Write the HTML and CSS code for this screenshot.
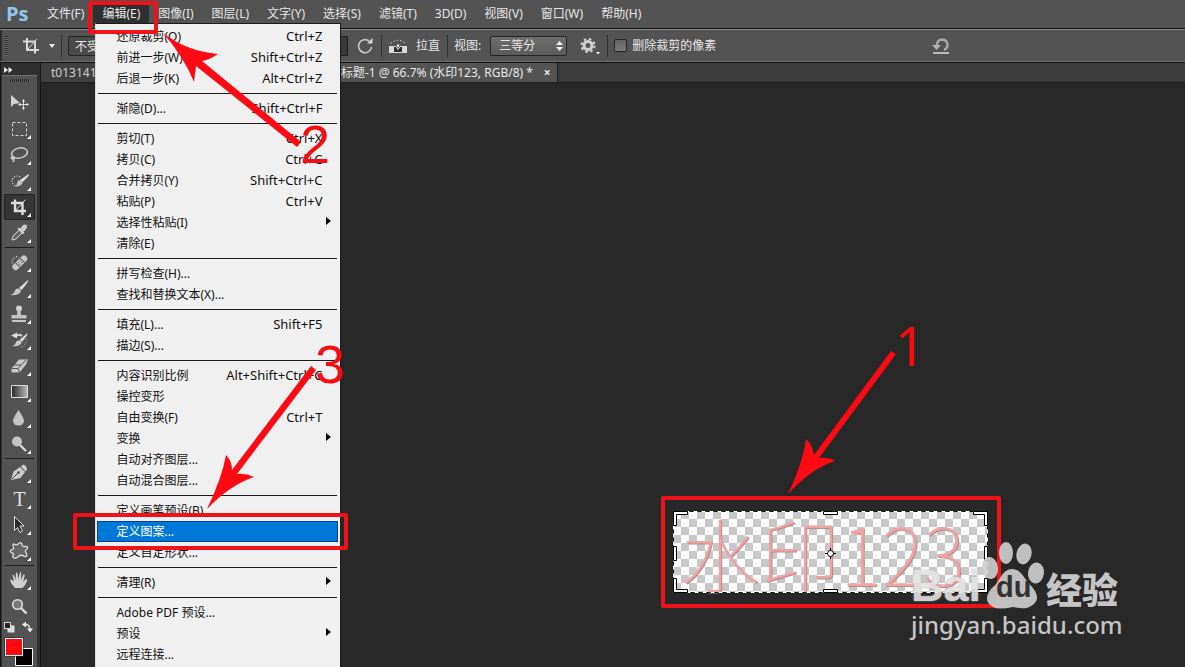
FILE: index.html
```html
<!DOCTYPE html>
<html lang="zh-CN">
<head>
<meta charset="utf-8">
<title>Ps</title>
<link rel="stylesheet" href="styles.css">
</head>
<body>
<div class="app">
  <header class="menubar">
    <span class="logo">Ps</span>
    <nav class="menus">
      <button class="menu-title">文件(F)</button>
      <div class="menu-holder">
        <button class="menu-title is-open">编辑(E)</button>
        <div class="dropdown">
          <button class="entry"><span>还原裁剪(O)</span><kbd>Ctrl+Z</kbd></button>
          <button class="entry"><span>前进一步(W)</span><kbd>Shift+Ctrl+Z</kbd></button>
          <button class="entry"><span>后退一步(K)</span><kbd>Alt+Ctrl+Z</kbd></button>
          <hr class="rule">
          <button class="entry"><span>渐隐(D)...</span><kbd>Shift+Ctrl+F</kbd></button>
          <hr class="rule">
          <button class="entry"><span>剪切(T)</span><kbd>Ctrl+X</kbd></button>
          <button class="entry"><span>拷贝(C)</span><kbd>Ctrl+C</kbd></button>
          <button class="entry"><span>合并拷贝(Y)</span><kbd>Shift+Ctrl+C</kbd></button>
          <button class="entry"><span>粘贴(P)</span><kbd>Ctrl+V</kbd></button>
          <button class="entry has-sub"><span>选择性粘贴(I)</span></button>
          <button class="entry"><span>清除(E)</span></button>
          <hr class="rule">
          <button class="entry"><span>拼写检查(H)...</span></button>
          <button class="entry"><span>查找和替换文本(X)...</span></button>
          <hr class="rule">
          <button class="entry"><span>填充(L)...</span><kbd>Shift+F5</kbd></button>
          <button class="entry"><span>描边(S)...</span></button>
          <hr class="rule">
          <button class="entry"><span>内容识别比例</span><kbd>Alt+Shift+Ctrl+C</kbd></button>
          <button class="entry"><span>操控变形</span></button>
          <button class="entry"><span>自由变换(F)</span><kbd>Ctrl+T</kbd></button>
          <button class="entry has-sub"><span>变换</span></button>
          <button class="entry"><span>自动对齐图层...</span></button>
          <button class="entry"><span>自动混合图层...</span></button>
          <hr class="rule">
          <button class="entry"><span>定义画笔预设(B)...</span></button>
          <button class="entry is-active"><span>定义图案...</span></button>
          <button class="entry"><span>定义自定形状...</span></button>
          <hr class="rule">
          <button class="entry has-sub"><span>清理(R)</span></button>
          <hr class="rule">
          <button class="entry"><span>Adobe PDF 预设...</span></button>
          <button class="entry has-sub"><span>预设</span></button>
          <button class="entry"><span>远程连接...</span></button>
        </div>
      </div>
      <button class="menu-title">图像(I)</button>
      <button class="menu-title">图层(L)</button>
      <button class="menu-title">文字(Y)</button>
      <button class="menu-title">选择(S)</button>
      <button class="menu-title">滤镜(T)</button>
      <button class="menu-title">3D(D)</button>
      <button class="menu-title">视图(V)</button>
      <button class="menu-title">窗口(W)</button>
      <button class="menu-title">帮助(H)</button>
    </nav>
  </header>

  <div class="options">
    <span class="grip"></span>
    <button class="option-tool" aria-label="裁剪工具">
      <svg width="36" height="20" viewBox="0 0 36 20"><g fill="none" stroke="#d8d8d8" stroke-width="2"><path d="M5 2v12h12M1 5.500h12v12"/><path d="M5.500 13.500L15 3" stroke-width="1"/></g><path d="M27 8h6l-3 4z" fill="#e6e6e6"/></svg>
    </button>
    <span class="bar"></span>
    <select class="ratio" aria-label="比例"><option>不受约束</option></select>
    <input class="size" type="text" aria-label="高度">
    <button class="flat rotate" aria-label="旋转裁剪框"><svg width="18" height="18" viewBox="0 0 18 18"><path d="M13 4A6.500 6.500 0 1 0 15.500 10" fill="none" stroke="#c8c8c8" stroke-width="1.600"/><path d="M11 6.500h5.500V1z" fill="#d8d8d8"/></svg></button>
    <span class="bar"></span>
    <button class="flat straighten"><svg width="20" height="18" viewBox="0 0 20 18"><path d="M2.500 6.500Q10 0 17.500 6.500" fill="none" stroke="#ddd" stroke-dasharray="1.500 2"/><path d="M1 9h4v7H1zM15 9h4v7h-4z" fill="#d8d8d8"/><path d="M5.500 15.500V9.500h2.500l2 3 2-3h2.500v6z" fill="#2c2c2c" stroke="#ddd"/><path d="M8.500 7.500h3L10 11z" fill="#eee"/></svg><span>拉直</span></button>
    <span class="bar"></span>
    <label class="view">视图: <span class="picker"><select><option>三等分</option></select><svg width="7" height="10" viewBox="0 0 7 10"><path d="M0 4h7L3.500 0zM0 6h7l-3.500 4z" fill="#f0f0f0"/></svg></span></label>
    <button class="flat gear" aria-label="设置"><svg width="22" height="18" viewBox="0 0 22 18"><circle cx="8" cy="8.500" r="4" fill="none" stroke="#d0d0d0" stroke-width="3"/><circle cx="8" cy="8.500" r="6.500" fill="none" stroke="#d0d0d0" stroke-width="2" stroke-dasharray="2.600 2.500"/><path d="M16 15h4l-2 2.500z" fill="#fff"/></svg></button>
    <span class="bar"></span>
    <label class="delete-crop"><input type="checkbox"><span>删除裁剪的像素</span></label>
    <button class="flat reset" aria-label="复位裁剪"><svg width="18" height="18" viewBox="0 0 18 18"><path d="M5 9Q4.500 2.500 10.500 2.500Q15.500 3 15.500 8Q15.500 11.500 12 13" fill="none" stroke="#a8a8a8" stroke-width="2.400"/><path d="M0 8h9l-4.500 5z" fill="#b4b4b4"/><path d="M1 16h16" stroke="#e8e8e8" stroke-width="1.400"/></svg></button>
  </div>

  <div class="workspace">
    <aside class="toolbox">
      <button class="collapse" aria-label="展开"><svg width="9" height="6" viewBox="0 0 9 6"><path d="M0 0l4 3-4 3zM4.500 0l4 3-4 3z" fill="#eee"/></svg></button>
      <div class="tools">
        <span class="handle"></span>
        <button class="tool" aria-label="移动"><svg viewBox="0 0 31 26"><path d="M7 5v12l3-3 6-1z" fill="#d2d2d2"/><path d="M15 14.500h9M19.500 10v9" stroke="#ddd"/><path d="M18 11.500h3L19.500 9zM18 17.500h3L19.500 20zM16.500 13v3L14 14.500zM22.500 13v3l2.500-1.500z" fill="#eee"/></svg></button>
        <button class="tool more" aria-label="选框"><svg viewBox="0 0 31 26"><path d="M8.500 6.500h14v13h-14z" fill="none" stroke="#d8d8d8" stroke-dasharray="3 2"/></svg></button>
        <button class="tool more" aria-label="套索"><svg viewBox="0 0 31 26"><g fill="none" stroke="#ccc" stroke-width="1.500"><ellipse cx="15.500" cy="11" rx="8" ry="5" transform="rotate(-12 15.500 11)"/><path d="M9.500 14.500q-3 .5-2 2 2 1.500 3-.5-.5-2-2 0 3 2 0 4"/></g></svg></button>
        <button class="tool more" aria-label="快速选择"><svg viewBox="0 0 31 26"><path d="M16 9a5 5 0 1 0-2 9" fill="none" stroke="#ddd" stroke-width="1.300" stroke-dasharray="1 1.600"/><path d="M24.500 6q2 1-6 8l-2.500-2z" fill="#ddd"/><path d="M16 12q3 1 2.500 3-2 4-8 3 3-1 2.500-3 .5-2.500 3-3z" fill="#c4c4c4"/></svg></button>
        <button class="tool more is-selected" aria-label="裁剪"><svg viewBox="0 0 31 26"><path d="M11 5.500v11.500h11M7 9h11.500v12" fill="none" stroke="#ddd" stroke-width="2.400"/><path d="M12 16L21.500 5.500" stroke="#ddd"/></svg></button>
        <button class="tool more" aria-label="吸管"><svg viewBox="0 0 31 26"><path d="M8 20q0-3 2-5l5-5 3 3-5 5q-2 2-5 2z" fill="#686868" stroke="#ddd"/><path d="M13.500 8.500l1.500-1 1.500 1q2-4 4.500-4t2 3q-.5 2-3.500 4l1 1.500-1.500 1.500z" fill="#c8c8c8"/></svg></button>
        <hr class="tool-rule">
        <button class="tool more" aria-label="修复画笔"><svg viewBox="0 0 31 26"><path d="M12 18a5 5 0 1 1 3-10" fill="none" stroke="#ddd" stroke-width="1.300" stroke-dasharray="1 1.600"/><g transform="rotate(-45 16 14)"><rect x="7" y="10.500" width="18" height="6.500" rx="3" fill="#c8c8c8"/><path d="M13 10.500v6.500M19.500 10.500v6.500" stroke="#555"/><path d="M14.500 12.500h1M17 12.500h1M14.500 15h1M17 15h1" stroke="#333"/></g></svg></button>
        <button class="tool more" aria-label="画笔"><svg viewBox="0 0 31 26"><path d="M24 5q1.500 1-6.500 10l-2.500-2z" fill="#ddd"/><path d="M14 13.500q3 .5 3 3-2.500 4.500-11 3.500 4-1 4.500-3.500 1-3 3.500-3z" fill="#c8c8c8"/></svg></button>
        <button class="tool more" aria-label="图章"><svg viewBox="0 0 31 26"><circle cx="15" cy="7.500" r="3" fill="#d0d0d0"/><path d="M13.500 9h3l.5 5h5.500v3.500h-15v-3.500H13z" fill="#c4c4c4"/><path d="M8 20h14" stroke="#eee" stroke-width="1.500"/></svg></button>
        <button class="tool more" aria-label="历史记录画笔"><svg viewBox="0 0 31 26"><path d="M11 9.500q4-3 7-.5" fill="none" stroke="#ccc" stroke-width="2"/><path d="M7 8.500l6-3v6z" fill="#ddd"/><path d="M23.500 6q1 1-5.500 9l-2.500-2z" fill="#ddd"/><path d="M14.500 13.500q3 .5 3 2.500-2.500 4-9.500 3 3.500-1 3.500-3 .5-2.500 3-2.500z" fill="#ccc"/><path d="M22 12q1 6-5 8" fill="none" stroke="#ddd" stroke-dasharray="1 2"/></svg></button>
        <button class="tool more" aria-label="橡皮擦"><svg viewBox="0 0 31 26"><path d="M7.500 15.500L15 6.500h9l-2 5-6.500 8h-8z" fill="#c8c8c8"/><path d="M7.500 15.500H14l1.500 4M14 15.500L22 7M10.500 12H17" fill="none" stroke="#555"/></svg></button>
        <button class="tool more" aria-label="渐变"><svg viewBox="0 0 31 26"><defs><linearGradient id="ramp"><stop stop-color="#282828"/><stop offset="1" stop-color="#bbb"/></linearGradient></defs><path d="M7.500 6.500h16v12h-16z" fill="url(#ramp)" stroke="#ddd"/></svg></button>
        <button class="tool more" aria-label="模糊"><svg viewBox="0 0 31 26"><path d="M14.500 5q5.500 8 5.500 11a5.500 4.500 0 0 1-11 0q0-3 5.500-11z" fill="#c4c4c4"/></svg></button>
        <button class="tool more" aria-label="减淡"><svg viewBox="0 0 31 26"><path d="M16 14l6 6" stroke="#ddd" stroke-width="2.200"/><circle cx="13" cy="10.500" r="5" fill="#c4c4c4"/></svg></button>
        <hr class="tool-rule">
        <button class="tool more" aria-label="钢笔"><svg viewBox="0 0 31 26"><path d="M7 20l2.500-8.500L16 7l5 5-4.500 6z" fill="#ccc"/><path d="M17 6.500l2-2q4 1 4 5l-1.500 2z" fill="#ccc"/><path d="M8 19l6-6" stroke="#444"/><circle cx="14.500" cy="12.500" r="1.200" fill="#444"/></svg></button>
        <button class="tool more type">T</button>
        <button class="tool more" aria-label="路径选择"><svg viewBox="0 0 31 26"><path d="M10.500 4.500v14l3-3 2.500 5 2.500-1.500-2.500-5h4z" fill="#2a2a2a" stroke="#ddd"/></svg></button>
        <button class="tool more" aria-label="形状"><svg viewBox="0 0 31 26"><path d="M10 6Q13 8 14.500 5.500Q17 3.500 18 6Q18 9 21 8.500Q25 8 23 11Q20 13 22.500 15.500Q24 19 20.500 18.500Q17 16 14.500 18.500Q10 22 8.500 18.500Q11 15.500 8 15Q4.500 13 8 11.500Q11 11 9 8Q8.500 6 10 6Z" fill="#666" stroke="#ddd" stroke-width="1.300"/></svg></button>
        <hr class="tool-rule">
        <button class="tool more" aria-label="抓手"><svg viewBox="0 0 31 26"><path d="M11 21q-4-4-5-8 1-1.500 4 2L8.500 8q1.500-1.500 3 5l.5-7.500q2-1 2.300 7l1.700-7.500q2 0 .8 8l3-6q2 0-.8 8l3-3q2 0 .5 3-2 5-4.500 6z" fill="#d0d0d0"/></svg></button>
        <button class="tool" aria-label="缩放"><svg viewBox="0 0 31 26"><path d="M17 15l5.500 5.500" stroke="#ddd" stroke-width="2.400"/><circle cx="13.500" cy="11.500" r="4.800" fill="#777" stroke="#ddd" stroke-width="1.600"/></svg></button>
        <button class="tool swaps" aria-label="切换颜色"><svg viewBox="0 0 31 18"><path d="M3.500 6.500h7v7h-7z" fill="#ddd"/><path d="M.5 3.500h6v6h-6z" fill="#222" stroke="#ddd"/><path d="M20 5.500q6-1 6 6" fill="none" stroke="#ddd" stroke-width="1.500"/><path d="M18 5.500l4-3v6zM23 9.500h6l-3 4z" fill="#eee"/></svg></button>
        <div class="swatches"><svg viewBox="0 0 31 30"><path d="M11.500 11.500h17v17h-17z" fill="#000" stroke="#fff"/><path d="M.5.500h19v19H.5z" fill="#222"/><path d="M1.500 1.500h17v17h-17z" fill="#ff0812" stroke="#fff"/></svg></div>
      </div>
    </aside>
    <main class="stage">
      <div class="tabs">
        <button class="tab first">t013141</button>
        <button class="tab is-current"><span>未标题-1 @ 66.7% (水印123, RGB/8) *</span><span class="close">×</span></button>
      </div>
      <div class="canvas">
        <div class="picture">
          <span class="art">水印123</span>
          <svg class="crop-frame" viewBox="0 0 315 82"><path d="M.5.500h314v81H.5z" fill="none" stroke="#fff"/><path d="M.5.500h314v81H.5z" fill="none" stroke="#000" stroke-dasharray="4 4"/><g fill="#fff" stroke="#000"><path d="M.5.500h14v3H3.500v11h-3zM314.500.500h-14v3h11v11h3zM.5 81.500h14v-3H3.500v-11h-3zM314.500 81.500h-14v-3h11v-11h3zM150.500.500h14v3h-14zM150.500 78.500h14v3h-14zM.5 35.500h3v14h-3zM311.500 35.500h3v14h-3z"/></g><circle cx="157.500" cy="42.500" r="3" fill="#fff" stroke="#000"/><path d="M157.500 37v3M157.500 45v3M152 42.500h3M160 42.500h3" stroke="#000"/></svg>
        </div>
      </div>
    </main>
  </div>

  <svg class="notes" width="1185" height="667" viewBox="0 0 1185 667">
    <g class="frames">
      <rect x="90" y="3" width="66" height="29"/>
      <rect x="75" y="515" width="271" height="33"/>
      <rect x="663" y="498" width="336" height="108"/>
    </g>
    <g class="arrows">
      <path d="M788 494Q803 462 806 439Q812 444 814 455L891 351L896 354L819 458Q828 457 835 461Q812 468 788 494z"/>
      <path d="M163 33Q186 51 218 54Q209 60 202 61L301 142L297 147L196 66Q195 74 194 82Q184 57 163 33z"/>
      <path d="M207 509Q222 478 226 455Q232 461 232 470L311 366L316 370L237 474Q246 473 254 477Q230 485 207 509z"/>
    </g>
    <g class="numbers">
      <text class="one" x="895" y="366">1</text>
      <text x="300" y="163">2</text>
      <text x="315" y="383">3</text>
    </g>
  </svg>

  <div class="brand">
    <div class="brand-top">
      <span class="brand-bai">Bai</span>
      <span class="paw"><svg viewBox="0 0 66 68"><g fill="#d0d0d0"><ellipse cx="10" cy="27" rx="8" ry="11" transform="rotate(-8 10 27)"/><ellipse cx="26" cy="12" rx="7" ry="11"/><ellipse cx="44" cy="13" rx="7.500" ry="10.500" transform="rotate(12 44 13)"/><ellipse cx="56" cy="32" rx="8" ry="10.500" transform="rotate(8 56 32)"/><path d="M32 28q7 0 12 8 4 6 9 11 9 12-2 18-5 4-18 1-15 3-20 0-11-6-2-18 6-5 9-11 5-9 12-9z"/></g></svg><b class="brand-du">du</b></span>
      <span class="brand-jy">经验</span>
    </div>
    <div class="brand-url">jingyan.baidu.com</div>
  </div>
</div>
</body>
</html>
```
FILE: styles.css
```css
* { box-sizing: border-box; }
body {
  margin: 0;
  background: #282828;
  color: #e6e6e6;
  font: 12px/20px "Noto Sans", "Noto Sans CJK SC", sans-serif;
  overflow: hidden;
}
button, input, select { font: inherit; color: inherit; margin: 0; }
button { border: 0; padding: 0; background: none; white-space: nowrap; }
svg { display: block; }

.app { position: relative; display: flex; flex-direction: column; height: 100vh; }

.menubar { display: flex; align-items: center; height: 28px; background: #535353; }
.logo { width: 38px; padding-left: 6px; font: bold 20px/26px "Open Sans", sans-serif; color: #93c4ec; }
.menus { display: flex; }
.menu-title { padding: 0 9px; height: 24px; line-height: 24px; }
.menu-title.is-open { background: #303030; }
.menu-holder { position: relative; }

.dropdown {
  position: absolute;
  z-index: 2;
  top: 21px;
  left: 2px;
  width: 246px;
  padding: 2px 2px 8px 1px;
  background: #f0f0f0;
  border: 1px solid #1c1c1c;
  border-left-color: #d8d8d8;
  color: #111;
}
.entry {
  position: relative;
  display: flex;
  justify-content: space-between;
  align-items: center;
  width: 100%;
  height: 21px;
  padding: 0 16px 0 19px;
}
.entry kbd { font: 13px/18px "Noto Sans", sans-serif; height: 20px; }
.entry.is-active { background: #0078d7; color: #fff; outline: 1px solid #0a3f9c; outline-offset: -1px; }
.has-sub::after {
  content: "";
  margin-right: -9px;
  margin-bottom: 4px;
  border: 4px solid transparent;
  border-left: 5px solid #000;
  border-right: 0;
}
.rule { height: 1px; margin: 4px 1px; border: 0; background: #1a1a1a; }

.options {
  display: flex;
  align-items: center;
  height: 35px;
  padding-left: 5px;
  background: #535353;
  border-top: 1px solid #111;
  border-bottom: 1px solid #111;
  box-shadow: inset 0 1px #8a8a8a, inset 0 -1px #6c6c6c, inset 2px 0 #2c2c2c;
}
.grip { width: 3px; height: 20px; background: repeating-linear-gradient(#2a2a2a 0 1px, #707070 1px 2px); }
.option-tool { margin: 0 3px 0 14px; }
.bar { width: 1px; height: 22px; background: #303030; flex: none; }
.ratio {
  width: 160px; height: 20px; margin-left: 6px; padding-left: 6px;
  appearance: none; background: #4a4a4a; border: 1px solid #262626; border-radius: 2px;
}
.size { width: 110px; height: 20px; margin-left: 10px; background: #3a3a3a; border: 1px solid #1e1e1e; }
.rotate { margin: 0 7px 0 8px; }
.straighten { display: flex; align-items: center; gap: 8px; margin: 0 7px 0 6px; }
.view { display: flex; align-items: center; gap: 9px; margin-left: 6px; }
.picker { position: relative; }
.picker select {
  display: block; width: 77px; height: 20px; padding: 0 0 0 8px; appearance: none; line-height: 16px;
  background: linear-gradient(#6e6e6e, #5a5a5a); border: 1px solid #252525; border-radius: 2px;
}
.picker svg { position: absolute; top: 5px; right: 4px; }
.gear { margin: 0 5px 0 13px; }
.delete-crop { display: flex; align-items: center; gap: 5px; margin-left: 6px; }
.delete-crop input {
  width: 13px; height: 13px; appearance: none; border: 1px solid #262626; border-radius: 2px;
  background: linear-gradient(#626262, #7a7a7a);
}
.reset { margin-left: 216px; }

.workspace { display: flex; flex: 1; min-height: 0; }
.toolbox {
  flex: none; width: 41px; padding: 1px 3px 0 1px; background: #303030;
  border-right: 1px solid #161616; border-left: 1px solid #161616;
}
.collapse { display: flex; align-items: center; width: 100%; height: 11px; padding-left: 2px; }
.tools { display: flex; flex-direction: column; align-items: center; height: 100%; background: #535353; border-top: 1px solid #707070; }
.handle { width: 20px; height: 3px; margin: 3px 0 8px; background: repeating-linear-gradient(90deg, #222 0 1px, #606060 1px 2px); }
.tool { position: relative; flex: none; width: 31px; height: 26px; }
.tool.is-selected { background: #353535; box-shadow: inset 0 0 0 1px #222; border-radius: 2px; }
.more::after {
  content: ""; position: absolute; right: 4px; bottom: 3px;
  border: 2px solid; border-color: transparent #fff #fff transparent;
}
.tool-rule { width: 29px; height: 1px; margin: 1px 0; border: 0; background: #1c1c1c; flex: none; }
.type { font: 20px/26px "Liberation Serif", serif; color: #e0e0e0; }
.tool.swaps { height: 18px; }
.swatches { flex: none; width: 31px; height: 30px; }

.stage { flex: 1; min-width: 0; display: flex; flex-direction: column; }
.tabs { display: flex; height: 20px; background: #3b3b3b; border-bottom: 1px solid #1e1e1e; }
.tab { padding: 0 10px; border-right: 1px solid #1e1e1e; line-height: 20px; color: #cfcfcf; text-align: left; }
.tab.first { width: 279px; background: #404040; }
.tab.is-current { display: flex; gap: 11px; padding: 0 6px 0 9px; background: #535353; color: #e8e8e8; }
.close { font-weight: bold; }
.canvas { position: relative; flex: 1; background: #282828; }
.picture {
  position: absolute; left: 632px; top: 428px; width: 315px; height: 82px; padding-left: 7px;
  background: repeating-conic-gradient(#c8c8c8 0 25%, #fff 0 50%) 0 0 / 16px 16px;
}
.art {
  font: 100 80px/80px "Noto Sans CJK SC", sans-serif;
  color: #eca6a6; white-space: nowrap; text-shadow: 1px 1px #c08a8a;
}
.crop-frame { position: absolute; inset: 0; }

.notes { position: absolute; z-index: 3; left: 0; top: 0; pointer-events: none; }
.frames { fill: none; stroke: #ee131b; stroke-width: 4; stroke-linejoin: round; }
.arrows { fill: #ff0a14; }
.numbers { fill: #f50d12; font: 54px "Liberation Sans", sans-serif; }
.numbers .one { font-family: "Noto Sans", sans-serif; }

.brand { position: absolute; z-index: 4; left: 911px; top: 541px; color: #d6d6d6; opacity: .9; pointer-events: none; }
.brand-top { display: flex; align-items: flex-end; height: 67px; }
.brand-bai { width: 69px; height: 44px; font: bold 45px/44px "Liberation Sans", sans-serif; color: #e2e2e2; text-shadow: 0 0 2px #aaa; }
.paw { position: relative; width: 66px; height: 67px; }
.brand-du { position: absolute; left: 16px; bottom: 6px; font: bold 29px/30px "Liberation Sans", sans-serif; color: #333; }
.brand-jy { font: 900 36px/40px "Noto Sans CJK SC", sans-serif; }
.brand-url { font: 500 24px/34px "Noto Sans", sans-serif; white-space: nowrap; }
```
